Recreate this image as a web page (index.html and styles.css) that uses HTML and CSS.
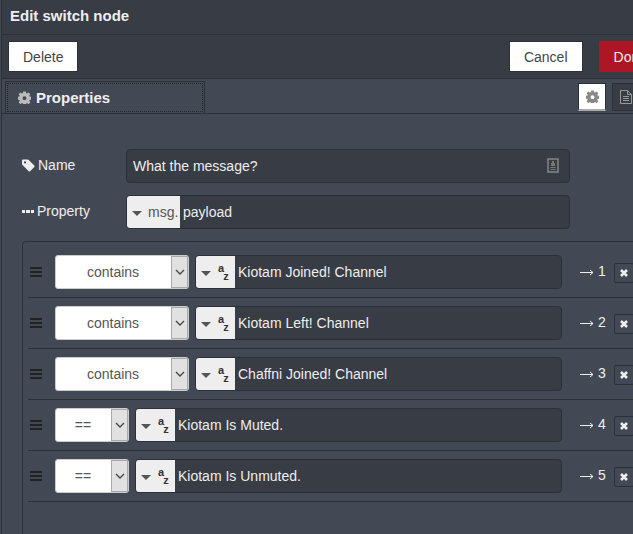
FILE: index.html
```
<!DOCTYPE html>
<html lang="en">
<head>
<meta charset="utf-8">
<title>Edit switch node</title>
<link rel="stylesheet" href="styles.css">
</head>
<body>
<svg class="defs" aria-hidden="true">
  <symbol id="gear" viewBox="0 0 16 16"><path fill="currentColor" fill-rule="evenodd" d="M6.300.5h3.400l.4 2.200 1 .4 1.900-1.300 2.200 2.200-1.300 1.900.4 1 2.200.4v3.400l-2.200.4-.4 1 1.300 1.900-2.200 2.200-1.900-1.300-1 .4-.4 2.200H6.300l-.4-2.200-1-.4L3 16.200.8 14l1.300-1.900-.4-1-2.200-.4V7.300l2.200-.4.4-1L.8 4 3 1.800l1.900 1.300 1-.4zM8 6.400a2.400 2.400 0 1 0 0 4.800 2.400 2.400 0 0 0 0-4.800z"/></symbol>
  <symbol id="chevron" viewBox="0 0 10 6"><path fill="none" stroke="currentColor" stroke-width="1.300" d="M1 1l4 4 4-4"/></symbol>
  <symbol id="cross" viewBox="0 0 8 8"><path stroke="currentColor" stroke-width="2.600" d="M1 1l6 6M7 1L1 7"/></symbol>
  <symbol id="bars" viewBox="0 0 12 10"><path fill="currentColor" d="M0 0h12v2H0zM0 4h12v2H0zM0 8h12v2H0z"/></symbol>
</svg>
<main class="panel">
  <header class="title"><h1>Edit switch node</h1></header>
  <div class="toolbar">
    <button class="btn" type="button">Delete</button>
    <button class="btn cancel" type="button">Cancel</button>
    <button class="btn done" type="button">Done</button>
  </div>
  <nav class="tabs">
    <button class="tab" type="button"><span class="tab-focus"><svg class="gear"><use href="#gear"/></svg>Properties</span></button>
    <button class="icon-tab active" type="button" aria-label="Properties"><svg class="gear"><use href="#gear"/></svg></button>
    <button class="icon-tab" type="button" aria-label="Description"><svg class="doc" viewBox="0 0 12 14"><path fill="none" stroke="currentColor" d="M.5.500h7l4 4v9H.500zM7.500.500v4h4M3 6.500h6M3 8.500h6M3 10.500h6"/></svg></button>
  </nav>
  <form class="form">
    <div class="field">
      <label for="name"><svg class="tag" viewBox="0 0 13 13"><path fill="currentColor" fill-rule="evenodd" d="M0 1.500Q0 .5 1 .5h4.500q.7 0 1.200.5l5.600 5.500q.7.700 0 1.400l-4.200 4.300q-.7.600-1.400 0L1 6.600Q0 5.800 0 5zM3 2.300a1.100 1.100 0 1 0 0 2.200 1.100 1.100 0 0 0 0-2.200z"/></svg>Name</label>
      <div class="entry">
        <input id="name" class="text padded" type="text" value="What the message?">
        <svg class="autofill" viewBox="0 0 12 15"><path fill="none" stroke="#858585" stroke-width="1.500" d="M1 1h10v13H1z"/><path fill="#777" d="M5 3h2v2h1v3H4V5h1zM3.500 9h5v1h-5zM3.500 11h5v1h-5z"/></svg>
      </div>
    </div>
    <div class="field">
      <label for="property"><svg class="dots" viewBox="0 0 12 3"><path fill="currentColor" d="M0 0h3v3H0zM4 0h4v3H4zM9 0h3v3H9z"/></svg>Property</label>
      <div class="entry">
        <button class="type msg" type="button"><i class="caret"></i>msg.</button>
        <input id="property" class="text" type="text" value="payload">
      </div>
    </div>
    <ol class="rules" id="rules"></ol>
  </form>
</main>
<template id="rule">
  <li class="rule">
    <svg class="handle"><use href="#bars"/></svg>
    <div class="select">
      <select aria-label="Condition"><option></option></select>
      <span class="drop"><svg><use href="#chevron"/></svg></span>
    </div>
    <div class="entry">
      <button class="type" type="button" aria-label="String type"><i class="caret"></i><span class="az"><span>a</span><span>z</span></span></button>
      <input class="text" type="text" aria-label="Value">
    </div>
    <span class="output"><svg class="arrow" viewBox="0 0 14 9"><path fill="none" stroke="currentColor" d="M0 5.500h13M10 3l3 2.500L10 8"/></svg><span class="num"></span></span>
    <button class="remove" type="button" aria-label="Remove rule"><svg><use href="#cross"/></svg></button>
  </li>
</template>
<script src="script.js"></script>
</body>
</html>
```
FILE: styles.css
```
* { box-sizing: border-box; }
body {
  margin: 0;
  height: 100vh;
  overflow: hidden;
  background: #434954;
  color: #eee;
  font: 14px/20px "Liberation Sans", Arial, sans-serif;
}
button, input, select { font: inherit; color: inherit; margin: 0; }
button { cursor: pointer; }
svg { display: block; flex: none; }
.defs { position: absolute; width: 0; height: 0; }

/* The panel is a little wider than the window and is clipped by it. */
.panel {
  display: flex;
  flex-direction: column;
  min-height: 100vh;
  margin: 0 -40px 0 1px;
  border-left: 1px solid #2d3039;
}
.title {
  height: 35px;
  padding: 6px 8px;
  background: #383c45;
  border-bottom: 1px solid #2d3039;
}
.title h1 { margin: 0; font-size: 15px; line-height: 20px; }
.toolbar {
  display: flex;
  align-items: center;
  height: 44px;
  padding: 0 11px 0 6px;
  background: #383c45;
  border-bottom: 1px solid #2d3039;
}
.btn {
  height: 31px;
  padding: 0 14px;
  border: 1px solid #2d3039;
  background: #fff;
  color: #444;
}
.cancel { margin-left: auto; }
.done {
  margin-left: 16px;
  border-color: #ad1625;
  background: #ad1625;
  color: #eee;
}
.tabs {
  display: flex;
  align-items: flex-end;
  height: 35px;
  padding: 0 33px 0 3px;
  border-bottom: 1px solid #2d3039;
}
.tab {
  width: 200px;
  height: 32px;
  margin-right: auto;
  padding: 1px;
  border: 1px solid #2d3039;
  border-bottom: 0;
  background: none;
  font-size: 15px;
  font-weight: bold;
}
.tab-focus {
  display: flex;
  align-items: center;
  gap: 5px;
  height: 29px;
  padding-left: 10px;
  border: 1px dotted #24262c;
}
.gear { width: 13px; height: 13px; color: #bbb; }
.icon-tab {
  display: grid;
  place-items: center;
  width: 28px;
  height: 28px;
  margin: 0 0 2px 6px;
  padding: 0;
  border: 1px solid #2d3039;
  background: #383c45;
  color: #999;
}
.icon-tab.active { background: #fff; border-bottom: 2px solid #aaa; }
.active .gear { color: #888; }
.doc { width: 12px; height: 14px; }

.form {
  display: flex;
  flex-direction: column;
  flex: 1;
  padding: 35px 20px 0;
}
.field {
  display: flex;
  width: 548px;
  margin-bottom: 12px;
}
.field label {
  display: flex;
  align-items: center;
  gap: 3px;
  width: 104px;
  height: 32px;
}
.tag { width: 13px; height: 13px; }
.dots { width: 12px; height: 3px; }
.entry {
  display: flex;
  flex: 1;
  position: relative;
  height: 34px;
  border: 1px solid #2d3039;
  border-radius: 4px;
  background: #383c45;
  overflow: hidden;
}
.text {
  flex: 1;
  min-width: 0;
  padding: 0 3px;
  border: 0;
  outline: 0;
  background: transparent;
}
.padded { padding: 0 6px; }
.autofill {
  position: absolute;
  right: 10px;
  top: 8px;
  width: 12px;
  height: 15px;
}
.type {
  display: flex;
  align-items: center;
  width: 39px;
  padding: 0 0 0 5px;
  border: 0;
  background: #eee;
  color: #555;
}
.type.msg { width: 53px; }
.caret {
  margin: 2px 6px 0 0;
  border: 5px solid transparent;
  border-top-color: #555;
  border-bottom: 0;
}
.az {
  display: grid;
  grid-template-columns: 5px 6px;
  margin-left: 1px;
  color: #333;
  font: bold 11px/8px "Liberation Sans", Arial, sans-serif;
}
.az span:last-child { grid-area: 2 / 2; }

/* The rule list runs on below the window's lower edge. */
.rules {
  flex: 1;
  list-style: none;
  margin: 0 0 -8px;
  padding: 5px;
  border: 1px solid #2d3039;
  border-radius: 4px;
}
.rule {
  display: flex;
  align-items: center;
  height: 51px;
  border-bottom: 1px solid #2d3039;
}
.handle { width: 12px; height: 10px; margin: 0 13px 0 2px; color: #222; }
.select {
  position: relative;
  width: 134px;
  margin-right: 6px;
}
.short .select { width: 74px; }
select {
  appearance: none;
  display: block;
  width: 100%;
  height: 34px;
  padding: 0 18px 0 0;
  border: 1px solid #ccc;
  border-radius: 3px;
  background: #fff;
  color: #555;
  text-align: center;
  text-align-last: center;
}
.drop {
  position: absolute;
  top: 1px;
  right: 1px;
  display: grid;
  place-items: center;
  width: 17px;
  height: 32px;
  border: 1px solid #aaa;
  background: #e1e1e1;
  color: #444;
  pointer-events: none;
}
.drop svg { width: 10px; height: 6px; }
.output {
  display: flex;
  align-items: center;
  gap: 4px;
  width: 52px;
  margin-bottom: 2px;
  padding-left: 18px;
}
.arrow { width: 14px; height: 9px; }
.remove {
  display: grid;
  place-items: center;
  width: 20px;
  height: 20px;
  margin: 2px 13px 0 0;
  padding: 0;
  border: 1px solid #2d3039;
  border-radius: 2px;
  background: none;
}
.remove svg { width: 8px; height: 8px; }
```
FILE: script.js
```
const rules = [
  ["contains", "Kiotam Joined! Channel"],
  ["contains", "Kiotam Left! Channel"],
  ["contains", "Chaffni Joined! Channel"],
  ["==", "Kiotam Is Muted."],
  ["==", "Kiotam Is Unmuted."]
];
const list = document.getElementById("rules");
const template = document.getElementById("rule");
rules.forEach(([condition, value], i) => {
  const row = template.content.cloneNode(true);
  if (condition === "==") row.querySelector(".rule").classList.add("short");
  row.querySelector("option").textContent = condition;
  row.querySelector("input").setAttribute("value", value);
  row.querySelector(".num").textContent = i + 1;
  list.append(row);
});
```
